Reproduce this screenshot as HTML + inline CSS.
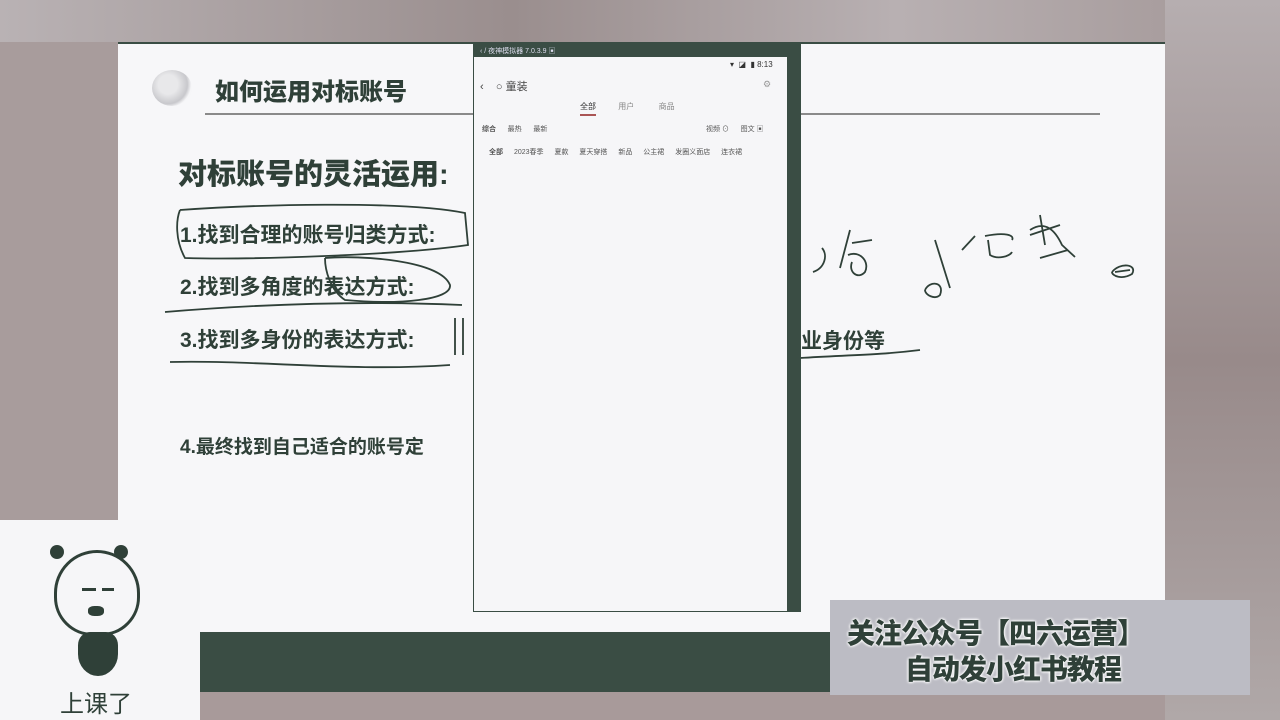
<!DOCTYPE html><html><head><meta charset="utf-8"><style>
*{margin:0;padding:0;box-sizing:border-box}
body{width:1280px;height:720px;overflow:hidden;position:relative;background:#a89c9c;font-family:"Liberation Sans","Noto Sans CJK SC",sans-serif;color:#2f4038}
.a{position:absolute}
.slide{left:118px;top:42px;width:1047px;height:590px;background:#f7f7f9;border-top:2px solid #3a4d44}
.t{font-weight:bold;white-space:nowrap}
</style></head><body>
<div class="a" style="left:0;top:0;width:1280px;height:42px;background:linear-gradient(90deg,#b9b2b4,#9a8e8e 40%,#b8b0b2 70%,#a29696)"></div>
<div class="a" style="left:1165px;top:0;width:115px;height:720px;background:linear-gradient(180deg,#b6aeb0,#988a8a 50%,#b0a8a8)"></div>
<div class="a slide"></div>
<div class="a" style="left:152px;top:70px;width:40px;height:36px;border-radius:50%;background:radial-gradient(circle at 40% 40%,#e8e8ea 30%,#c8c8cc 60%,#f6f6f8 72%)"></div>
<div class="a t" style="left:215px;top:72px;font-size:24px;font-weight:900">如何运用对标账号</div>
<div class="a" style="left:205px;top:113px;width:895px;height:2px;background:#8a8a8a"></div>
<div class="a t" style="left:178px;top:151px;font-size:29px;font-weight:900">对标账号的灵活运用:</div>
<div class="a" style="left:180px;top:219px;font-size:21px;font-weight:600">1.找到合理的账号归类方式:</div>
<div class="a" style="left:180px;top:271px;font-size:21px;font-weight:600">2.找到多角度的表达方式:</div>
<div class="a" style="left:180px;top:324px;font-size:21px;font-weight:600">3.找到多身份的表达方式:</div>
<div class="a" style="left:180px;top:432px;font-size:19px;font-weight:600">4.最终找到自己适合的账号定</div>
<div class="a t" style="left:801px;top:325px;font-size:21px">业身份等</div>
<svg class="a" style="left:0;top:0" width="1280" height="720" fill="none" stroke="#2f4038" stroke-width="1.8">
<path d="M180 210 C250 205,400 200,465 213 L468 245 C400 255,250 260,185 258 C175 240,176 220,180 210"/>
<path d="M325 258 C360 255,440 260,450 285 C452 300,400 305,345 300 C330 290,325 270,325 258"/>
<path d="M165 312 C250 305,350 300,462 305"/>
<path d="M170 362 C260 360,350 372,450 365"/>
<path d="M800 358 C850 355,880 355,920 350"/>
<path d="M455 318 L455 355 M463 318 L463 355"/>
<path d="M813 272 C825 268,828 255,822 248 M850 230 L840 268 M852 243 L872 240 M848 255 C860 250,870 262,865 272 C858 280,848 272,852 262"/>
<path d="M935 240 L950 288 M925 290 C930 280,945 282,940 295 C935 300,925 295,925 290 M962 250 L975 236 M985 236 C1005 232,1015 235,1012 240 M988 240 L990 255 C998 260,1010 256,1012 252 M1030 230 C1045 220,1055 230,1062 245 L1075 257 M1040 215 L1045 245 M1030 235 L1060 225 M1040 258 L1068 250"/>
<path d="M1112 272 C1120 262,1138 264,1132 274 C1122 280,1112 276,1112 272 M1115 272 L1130 270"/>
</svg>
<div class="a" style="left:473px;top:44px;width:328px;height:568px;background:#3a4d44"></div>
<div class="a" style="left:474px;top:57px;width:313px;height:554px;background:#f6f6f8"></div>
<div class="a" style="left:480px;top:46px;font-size:7px;color:#dde">‹ / 夜神模拟器 7.0.3.9 ▣</div>
<div class="a" style="left:730px;top:60px;font-size:8px;color:#333;white-space:nowrap">▾ &nbsp;◪ &nbsp;▮ 8:13</div>
<div class="a" style="left:480px;top:78px;font-size:11px;color:#444">‹ &nbsp;&nbsp; ○ 童装</div>
<div class="a" style="left:763px;top:79px;font-size:9px;color:#999">⚙</div>
<div class="a" style="left:580px;top:101px;font-size:8px;color:#333">全部 &nbsp;&nbsp;&nbsp;&nbsp;&nbsp;&nbsp;&nbsp;&nbsp;&nbsp;<span style="color:#888">用户 &nbsp;&nbsp;&nbsp;&nbsp;&nbsp;&nbsp;&nbsp;&nbsp;&nbsp; 商品</span></div>
<div class="a" style="left:580px;top:114px;width:16px;height:2px;background:#a55"></div>
<div class="a" style="left:482px;top:124px;font-size:7px;color:#555"><b>综合</b> &nbsp;&nbsp;&nbsp;&nbsp; 最热 &nbsp;&nbsp;&nbsp;&nbsp; 最新</div>
<div class="a" style="left:706px;top:124px;font-size:7px;color:#555">视频 ⊙ &nbsp;&nbsp;&nbsp;&nbsp; 图文 ▣</div>
<div class="a" style="left:489px;top:147px;font-size:7px;color:#555;white-space:nowrap;word-spacing:9px"><b>全部</b> 2023春季 夏款 夏天穿搭 新品 公主裙 发圈义面店 连衣裙</div>
<div class="a" style="left:0;top:520px;width:200px;height:200px;background:#f6f6f8"></div>
<div class="a" style="left:50px;top:545px;width:14px;height:14px;border-radius:50%;background:#2f4038"></div>
<div class="a" style="left:114px;top:545px;width:14px;height:14px;border-radius:50%;background:#2f4038"></div>
<div class="a" style="left:54px;top:550px;width:86px;height:86px;border-radius:50% 50% 45% 45%;border:3px solid #2f4038;background:#f6f6f8"></div>
<div class="a" style="left:82px;top:588px;width:14px;height:8px;border-top:3px solid #2f4038"></div>
<div class="a" style="left:102px;top:588px;width:12px;height:8px;border-top:3px solid #2f4038"></div>
<div class="a" style="left:88px;top:606px;width:16px;height:10px;border-radius:40%;background:#2f4038"></div>
<div class="a" style="left:78px;top:632px;width:40px;height:44px;border-radius:30% 30% 50% 50%;background:#2f4038"></div>
<div class="a" style="left:60px;top:684px;font-size:24px;color:#2f4038">上课了</div>
<div class="a" style="left:200px;top:632px;width:630px;height:60px;background:#3a4d44"></div>
<div class="a" style="left:200px;top:692px;width:965px;height:28px;background:#a89a9a"></div>
<div class="a" style="left:830px;top:600px;width:420px;height:95px;background:#bcbcc4"></div>
<div class="a t" style="left:847px;top:612px;font-size:28px;font-weight:900;letter-spacing:-1px;color:#2f4038;text-shadow:0 0 3px #fff,0 0 3px #fff,0 0 2px #fff">关注公众号【四六运营】</div>
<div class="a t" style="left:905px;top:648px;font-size:28px;font-weight:900;letter-spacing:-1px;color:#2f4038;text-shadow:0 0 3px #fff,0 0 3px #fff,0 0 2px #fff">自动发小红书教程</div>
</body></html>
